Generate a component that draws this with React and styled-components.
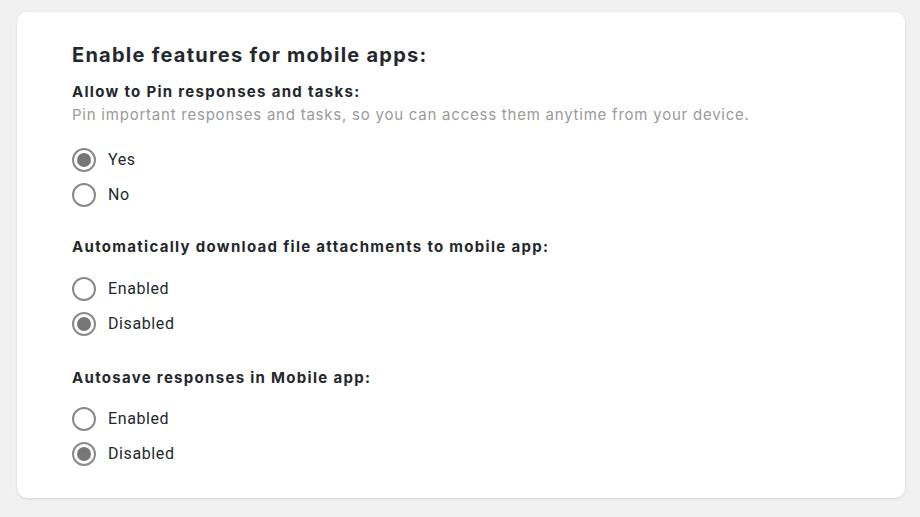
import React, { useState } from "react";
import styled, { createGlobalStyle } from "styled-components";

const Global = createGlobalStyle`
  html, body { margin: 0; padding: 0; background: #f1f1f1; }
  body { font-family: "Inter", "Roboto", sans-serif; }
`;

const Page = styled.div`
  padding: 12px 15px 19px 17px;
  box-sizing: border-box;
  width: 920px;
  height: 517px;
`;

const Card = styled.div`
  background: #fff;
  border-radius: 10px;
  box-shadow: 0 1px 3px rgba(0, 0, 0, 0.12);
  padding: 30px 55px 0 55px;
  height: 486px;
  box-sizing: border-box;
`;

const Title = styled.h1`
  margin: 0 0 14px;
  font-family: "Inter", sans-serif;
  font-weight: 700;
  font-size: 20px;
  line-height: 26px;
  color: #24282d;
  letter-spacing: 1.25px;
`;

const Section = styled.section`
  margin-bottom: ${(p) => p.$gap || 0}px;
`;

const Heading = styled.h2`
  margin: 0;
  font-family: "Inter", sans-serif;
  font-weight: 700;
  font-size: 15px;
  line-height: 20px;
  color: #24282d;
  letter-spacing: 1.3px;
`;

const Desc = styled.p`
  margin: 3px 0 0;
  font-family: "Inter", sans-serif;
  font-size: 15px;
  line-height: 20px;
  color: #9a9a9a;
  letter-spacing: 0.77px;
`;

const Options = styled.div`
  display: flex;
  flex-direction: column;
  gap: 11px;
  margin-top: ${(p) => p.$top}px;
`;

const Option = styled.label`
  display: flex;
  align-items: center;
  gap: 12px;
  cursor: pointer;
  font-family: "Roboto", sans-serif;
  font-size: 16px;
  line-height: 24px;
  color: #24282d;
  letter-spacing: 0.6px;
`;

const Radio = styled.span`
  width: 24px;
  height: 24px;
  box-sizing: border-box;
  border-radius: 50%;
  border: 2px solid #8a8a8a;
  display: flex;
  align-items: center;
  justify-content: center;
  &::after {
    content: "";
    width: 14px;
    height: 14px;
    border-radius: 50%;
    background: ${(p) => (p.$on ? "#777" : "transparent")};
  }
`;

function Group({ options, value, onChange, top }) {
  return (
    <Options $top={top}>
      {options.map((o) => (
        <Option key={o} onClick={() => onChange(o)}>
          <Radio $on={value === o} />
          {o}
        </Option>
      ))}
    </Options>
  );
}

export default function App() {
  const [pin, setPin] = useState("Yes");
  const [dl, setDl] = useState("Disabled");
  const [auto, setAuto] = useState("Disabled");
  return (
    <>
      <Global />
      <Page>
        <Card>
          <Title>Enable features for mobile apps:</Title>
          <Section $gap={30}>
            <Heading>Allow to Pin responses and tasks:</Heading>
            <Desc>
              Pin important responses and tasks, so you can access them anytime from your device.
            </Desc>
            <Group top={23} options={["Yes", "No"]} value={pin} onChange={setPin} />
          </Section>
          <Section $gap={32}>
            <Heading>Automatically download file attachments to mobile app:</Heading>
            <Group top={20} options={["Enabled", "Disabled"]} value={dl} onChange={setDl} />
          </Section>
          <Section>
            <Heading>Autosave responses in Mobile app:</Heading>
            <Group top={19} options={["Enabled", "Disabled"]} value={auto} onChange={setAuto} />
          </Section>
        </Card>
      </Page>
    </>
  );
}
